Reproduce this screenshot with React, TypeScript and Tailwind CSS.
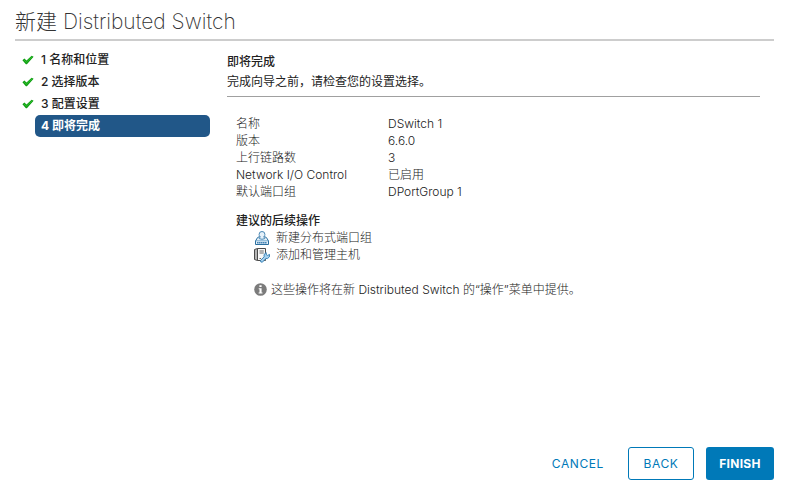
interface Step {
  label: string;
  done: boolean;
}

const steps: Step[] = [
  { label: "名称和位置", done: true },
  { label: "选择版本", done: true },
  { label: "配置设置", done: true },
  { label: "即将完成", done: false },
];

const settings = [
  { name: "名称", value: "DSwitch 1" },
  { name: "版本", value: "6.6.0" },
  { name: "上行链路数", value: "3" },
  { name: "Network I/O Control", value: "已启用" },
  { name: "默认端口组", value: "DPortGroup 1" },
];

function CheckIcon() {
  return (
    <svg width="12" height="10" viewBox="0 0 12 10" aria-hidden="true">
      <path d="M0.4 5.2 2.4 3.6 4.5 5.6 9.6 0.7 11.6 1.7 4.9 9.2 3.9 9.2Z" fill="#0f9d12" />
      <path d="M2.2 5.2 4.4 7.2 10 1.8" fill="none" stroke="#35c832" strokeWidth="0.9" />
    </svg>
  );
}

function PortGroupIcon() {
  return (
    <svg width="16" height="16" viewBox="0 0 16 16" aria-hidden="true">
      <path d="M5.6 6.6 3.6 7.5 1.5 11V14.5H14.5V11L12.4 7.5 10.4 6.6Z" fill="#e6f1f9" stroke="#2a6f9f" />
      <path d="M8 1.5A2.9 2.9 0 0 1 10.9 4.4Q10.9 5.8 9.8 6.8L10.8 8.6Q8 10 5.2 8.6L6.2 6.8Q5.1 5.8 5.1 4.4A2.9 2.9 0 0 1 8 1.5Z" fill="#e6f1f9" stroke="#4a88b5" />
      <path d="M1.5 10.8H14.5" stroke="#5b97c2" strokeWidth="0.8" />
      <path d="M3.2 12.8H13" stroke="#1f6aa5" strokeWidth="1.5" strokeDasharray="1.3 0.7" />
    </svg>
  );
}

function HostIcon() {
  return (
    <svg width="16" height="16" viewBox="0 0 16 16" aria-hidden="true">
      <path d="M0.5 2.5 3.5 1.5V13.5L0.5 12.5Z" fill="#b5b5b5" stroke="#4a4a4a" />
      <path d="M3.5 1.5H11.5V13.5H3.5Z" fill="#f7f7f7" stroke="#4a4a4a" />
      <path d="M5.5 4H9.8M5.5 6H9.8M5.5 11.5H7" stroke="#6b6b6b" />
      <path
        d="M6.5 13.4 10.2 9.8 10 7.6 12.2 5.6 12.4 7.8 13.6 8.4 15.6 7.4 15.4 9.9 13.5 11.6 12 11.4 8.4 15.2Q6.2 15.6 6.5 13.4Z"
        fill="#a5d0ee"
        stroke="#2f7ab0"
        strokeWidth="0.9"
      />
    </svg>
  );
}

function InfoIcon() {
  return (
    <svg width="13" height="13" viewBox="0 0 13 13" aria-hidden="true">
      <circle cx="6.5" cy="6.5" r="6.3" fill="#7b7b7b" />
      <path d="M5.4 2.2H7.6V4.1H5.4ZM4.7 5.2H7.6V9.5H8.5V10.6H4.6V9.5H5.5V6.3H4.7Z" fill="#fff" />
    </svg>
  );
}

function StepList() {
  return (
    <nav className="w-[195px] shrink-0 pt-2" aria-label="步骤">
      <ol>
        {steps.map((step, index) => (
          <li key={step.label} className="flex items-center">
            <span className="flex w-5 justify-center pl-[5px]">{step.done && <CheckIcon />}</span>
            <button
              type="button"
              aria-current={step.done ? undefined : "step"}
              className={
                step.done
                  ? "h-[22px] flex-1 pl-[6px] text-left font-medium text-[#222]"
                  : "h-[22px] flex-1 rounded-[5px] bg-[#215788] pl-[6px] text-left font-bold text-white"
              }
            >
              {index + 1} {step.label}
            </button>
          </li>
        ))}
      </ol>
    </nav>
  );
}

function Summary() {
  return (
    <main className="min-w-0 flex-1 pr-[14px] pl-[17px]">
      {/* Heading */}
      <div className="border-b border-[#a0a0a0] pt-[11px] pb-1 leading-5 text-[#222]">
        <h2 className="font-medium">即将完成</h2>
        <p>完成向导之前，请检查您的设置选择。</p>
      </div>

      <div className="px-[9px] pt-[18px] leading-[17px] font-light text-[#222]">
        {/* Settings */}
        <dl className="grid grid-cols-[152px_1fr]">
          {settings.map((item) => (
            <div key={item.name} className="contents">
              <dt>{item.name}</dt>
              <dd>{item.value}</dd>
            </div>
          ))}
        </dl>

        {/* Next steps */}
        <h3 className="mt-3 font-medium">建议的后续操作</h3>
        <ul className="pl-[18px]">
          <li className="flex items-center gap-[6px]">
            <PortGroupIcon />
            新建分布式端口组
          </li>
          <li className="flex items-center gap-[6px]">
            <HostIcon />
            添加和管理主机
          </li>
        </ul>
        <p className="mt-[18px] flex items-center gap-1 pl-[18px]">
          <InfoIcon />
          <span>这些操作将在新 Distributed Switch 的“操作”菜单中提供。</span>
        </p>
      </div>
    </main>
  );
}

export default function App() {
  return (
    <div className="flex min-h-screen flex-col bg-white pr-[13px] pl-[15px] font-['Inter','Noto_Sans_CJK_SC',sans-serif] text-[12px]">
      <header className="border-b-2 border-[#cdcdcd] pt-[6px] pb-px">
        <h1 className="text-[21px] leading-8 font-light text-[#333]">
          新建 <span className="font-extralight">Distributed Switch</span>
        </h1>
      </header>

      <div className="flex flex-1">
        <StepList />
        <Summary />
      </div>

      <footer className="flex justify-end pb-[10px] tracking-wider">
        <button type="button" className="h-[33px] px-6 text-[#0079b8]">
          CANCEL
        </button>
        <button
          type="button"
          className="h-[33px] w-[66px] rounded-[3px] border border-[#0079b8] text-[#0079b8]"
        >
          BACK
        </button>
        <button
          type="button"
          className="ml-3 h-[33px] w-[68px] rounded-[3px] bg-[#0079b8] font-bold tracking-wide text-white"
        >
          FINISH
        </button>
      </footer>
    </div>
  );
}
